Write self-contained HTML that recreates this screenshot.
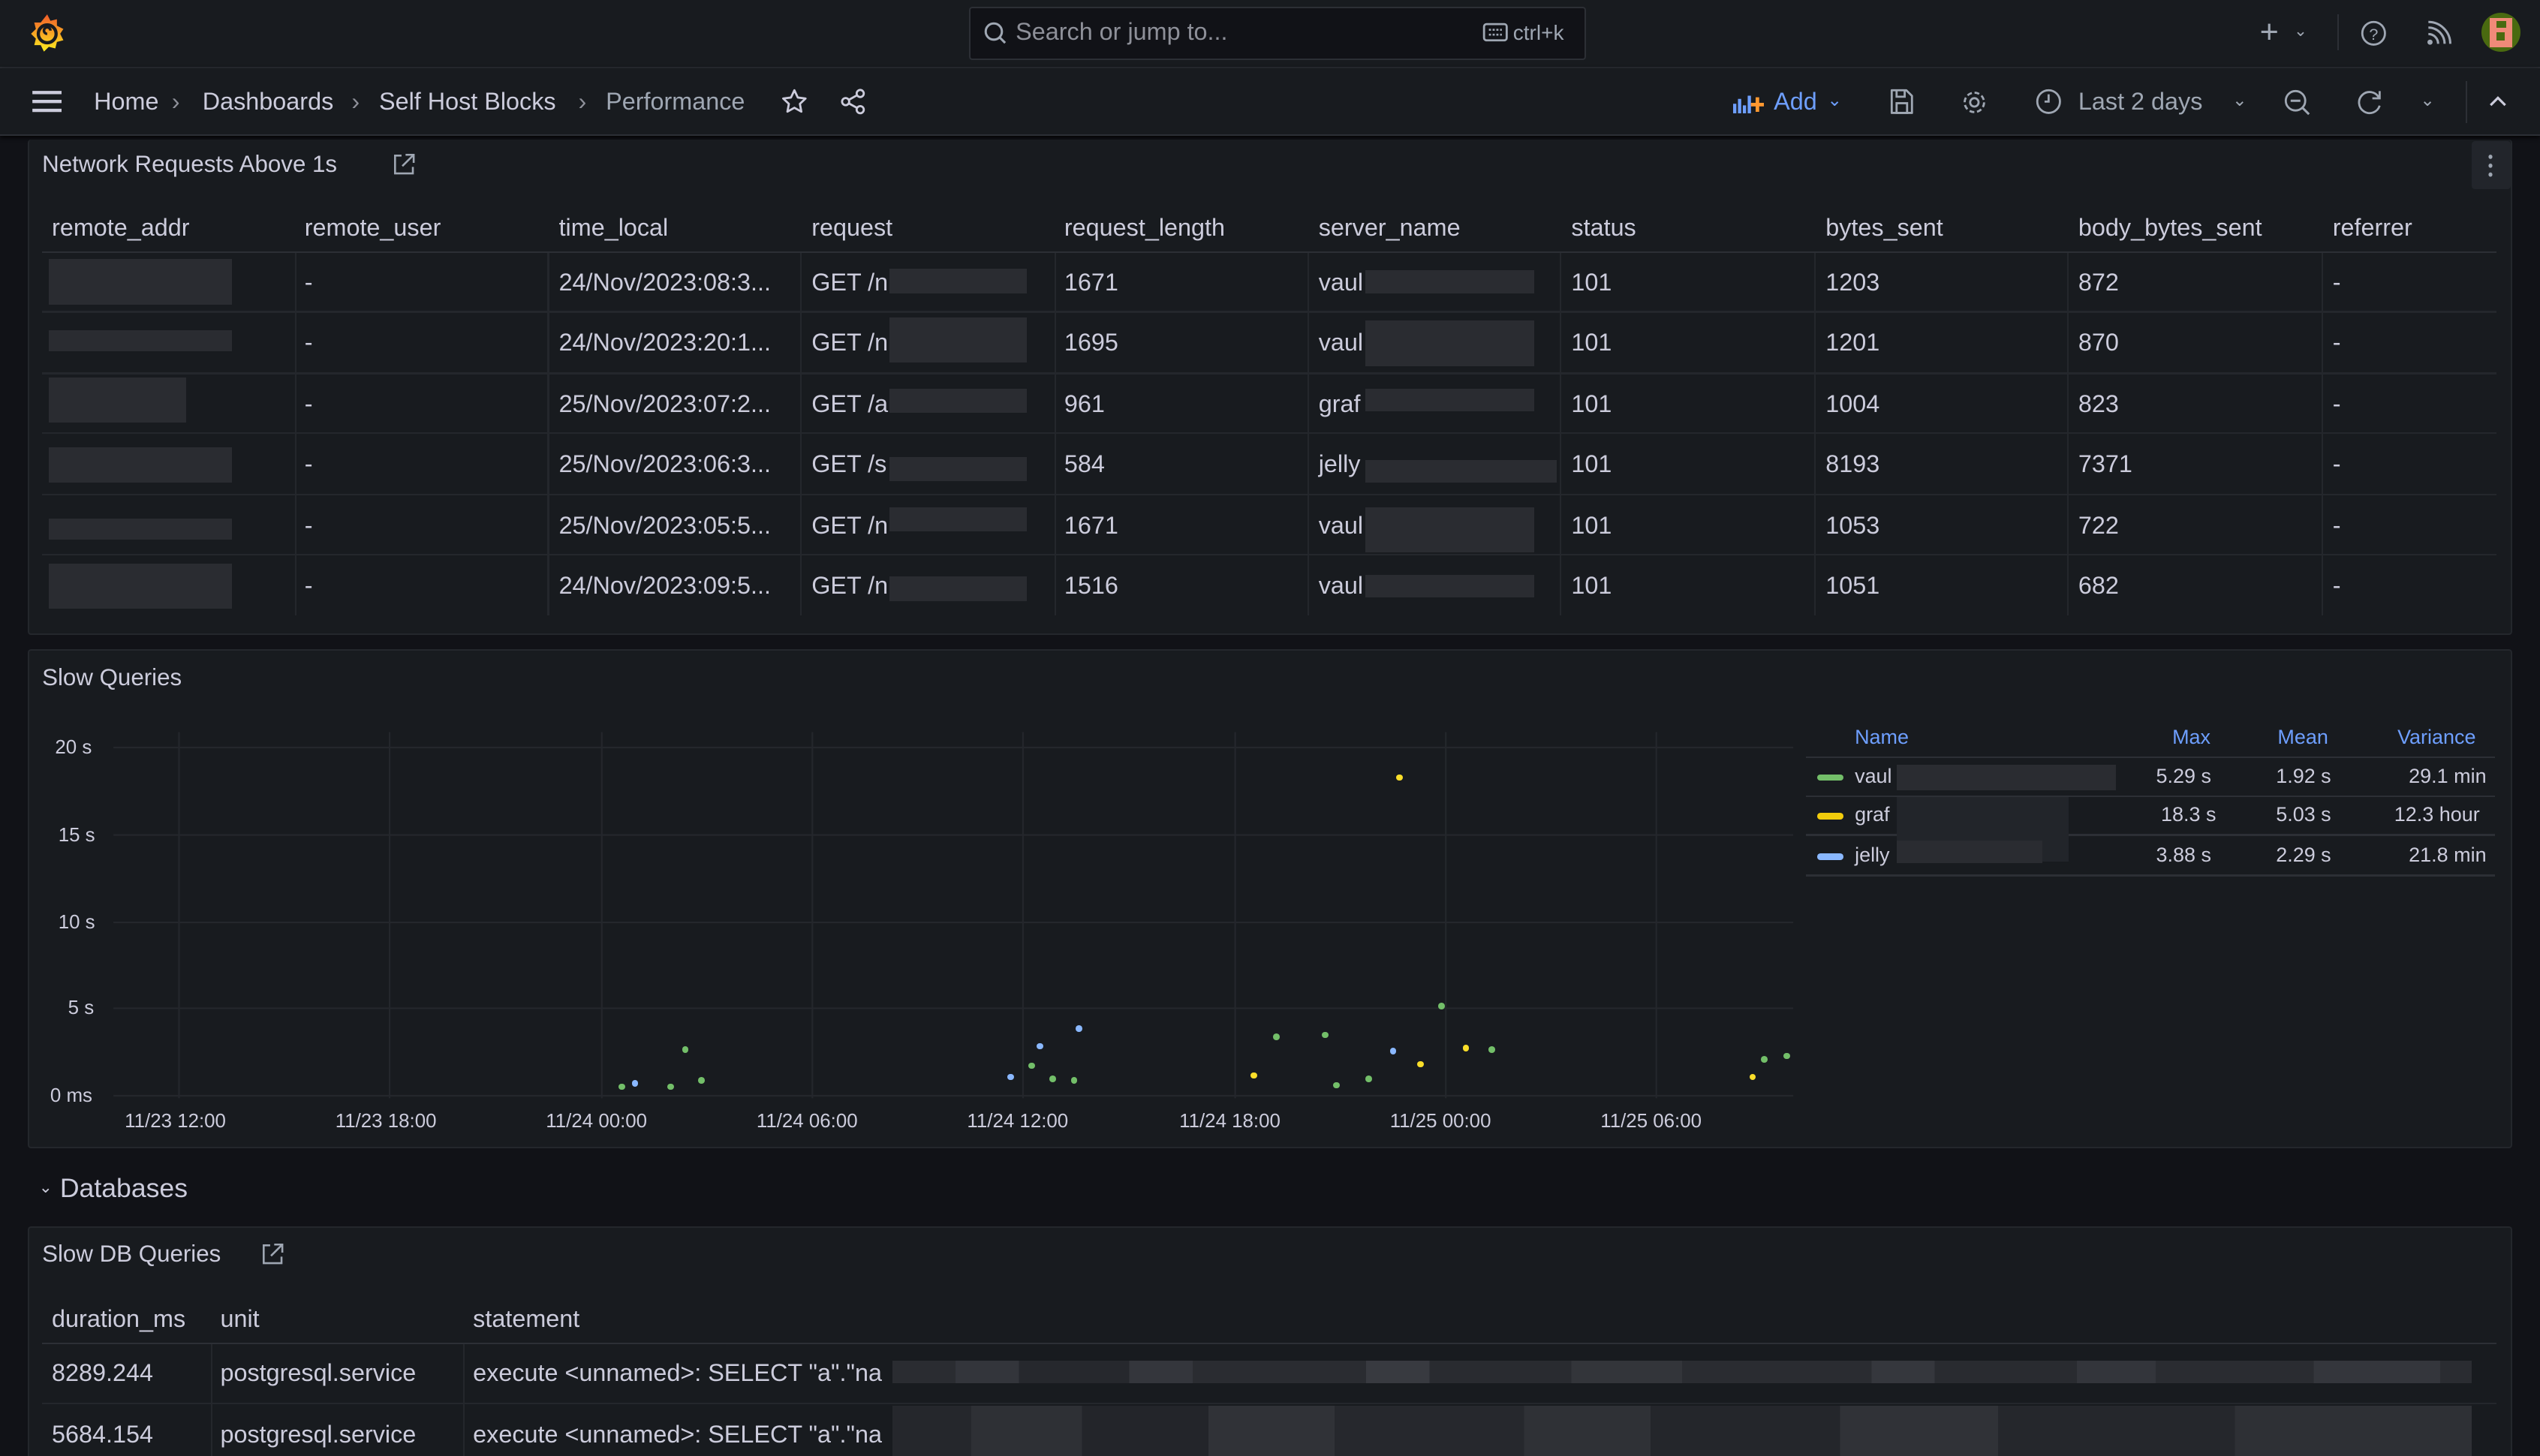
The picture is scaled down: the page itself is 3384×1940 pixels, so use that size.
<!DOCTYPE html>
<html><head><meta charset="utf-8">
<style>
*{box-sizing:border-box;margin:0;padding:0}
html,body{width:3384px;height:1940px;overflow:hidden;background:#111217}
#w{position:absolute;left:0;top:0;width:1568px;height:899px;zoom:2.15816;font-family:"Liberation Sans",sans-serif;color:#ccccdc;font-size:14.5px;background:#111217;overflow:hidden}
.a{position:absolute;white-space:nowrap}
.bar{position:absolute;left:0;width:1568px;background:#181b1f;border-bottom:1px solid #2c2f35}
.panel{position:absolute;background:#181b1f;border:1px solid #24272c;border-radius:2px;overflow:hidden}
.ttl{position:absolute;font-size:14.5px;color:#ccccdc}
.hl{position:absolute;height:1px;background:#2c2f35}
.vl{position:absolute;width:1px;background:#24272c}
.r{position:absolute;background:#2a2c31}
.icn{position:absolute}
.dot{position:absolute;width:4px;height:4px;border-radius:50%}
.g{background:#73bf69}.y{background:#fade2a}.b{background:#8ab8ff}
.ax{position:absolute;font-size:12px;color:#ccccdc}
.lg{font-size:12.5px}
.bc{position:absolute;top:54px;font-size:15px;color:#ccccdc}
.sep{position:absolute;top:54px;font-size:15px;color:#8e9099}
</style></head><body><div id="w">

<div class="bar" style="top:0;height:42px"></div>
<svg class="icn" style="left:17px;top:8px" width="24" height="26" viewBox="0 0 24 26">
<defs><linearGradient id="gf" x1="0" y1="1" x2="0" y2="0"><stop offset="0" stop-color="#fcee1f"/><stop offset="1" stop-color="#f15b2a"/></linearGradient></defs>
<path d="M12 1 L14 5 L18 4 L18 8 L22 10 L20 13 L22 17 L18 18 L17 22 L13 21 L10 24 L8 20 L4 20 L5 16 L2 13 L5 10 L4 6 L8 6 Z" fill="url(#gf)"/>
<circle cx="12" cy="13" r="5.5" fill="none" stroke="#181b1f" stroke-width="2"/><path d="M12 13 a2 2 0 1 1 2 -2" fill="none" stroke="#181b1f" stroke-width="1.6"/></svg>
<div class="a" style="left:598px;top:4px;width:381px;height:33px;background:#111217;border:1px solid #2c2f35;border-radius:2px"></div>
<svg class="icn" style="left:607px;top:13px" width="15" height="15" viewBox="0 0 15 15"><circle cx="6.5" cy="6.5" r="5" fill="none" stroke="#9fa7b3" stroke-width="1.4"/><path d="M10 10l3.5 3.5" stroke="#9fa7b3" stroke-width="1.4"/></svg>
<div class="a" style="left:627px;top:11px;color:#8e9099;font-size:15px">Search or jump to...</div>
<svg class="icn" style="left:915px;top:14px" width="16" height="12" viewBox="0 0 16 12"><rect x="1" y="1" width="14" height="10" rx="1.5" fill="none" stroke="#9fa7b3" stroke-width="1.3"/><path d="M4 4.5h8M4 7.5h8" stroke="#9fa7b3" stroke-width="1.2" stroke-dasharray="1.3 1"/></svg>
<div class="a" style="left:934px;top:13px;color:#9fa7b3;font-size:13px">ctrl+k</div>
<div class="a" style="left:1395px;top:9px;color:#9fa7b3;font-size:20px">+</div>
<div class="a" style="left:1416px;top:13px;color:#9fa7b3;font-size:10px">⌄</div>
<div class="vl" style="left:1443px;top:9px;height:22px;background:#2c2f35"></div>
<svg class="icn" style="left:1457px;top:12px" width="17" height="17" viewBox="0 0 17 17"><circle cx="8.5" cy="8.5" r="7" fill="none" stroke="#9fa7b3" stroke-width="1.3"/><text x="8.5" y="12.5" font-size="10" fill="#9fa7b3" text-anchor="middle" font-family="Liberation Sans">?</text></svg>
<svg class="icn" style="left:1497px;top:12px" width="17" height="17" viewBox="0 0 17 17"><circle cx="3" cy="14" r="1.6" fill="#9fa7b3"/><path d="M2 9a6 6 0 0 1 6 6M2 5a10 10 0 0 1 10 10M2 1.5a13.5 13.5 0 0 1 13.5 13.5" fill="none" stroke="#9fa7b3" stroke-width="1.4"/></svg>
<div class="a" style="left:1532px;top:8px;width:24px;height:24px;border-radius:50%;background:#4a6a10;overflow:hidden"><div style="position:absolute;left:5px;top:3px;width:14px;height:18px;background:#f08a78"></div><div style="position:absolute;left:9px;top:5px;width:6px;height:4px;background:#4a6a10"></div><div style="position:absolute;left:9px;top:12px;width:5px;height:5px;background:#4a6a10"></div></div>

<div class="bar" style="top:42px;height:42px;box-shadow:0 1px 3px #000"></div>
<svg class="icn" style="left:19px;top:55px" width="20" height="15" viewBox="0 0 20 15"><path d="M1 2h18M1 7.5h18M1 13h18" stroke="#ccccdc" stroke-width="2"/></svg>
<div class="bc" style="left:58px">Home</div>
<div class="sep" style="left:106px">›</div>
<div class="bc" style="left:125px">Dashboards</div>
<div class="sep" style="left:217px">›</div>
<div class="bc" style="left:234px">Self Host Blocks</div>
<div class="sep" style="left:357px">›</div>
<div class="bc" style="left:374px;color:#9fa7b3">Performance</div>
<svg class="icn" style="left:482px;top:54px" width="17" height="17" viewBox="0 0 17 17"><path d="M8.5 1.5l2.1 4.5 4.8.6-3.5 3.3.9 4.8-4.3-2.4-4.3 2.4.9-4.8L1.6 6.6l4.8-.6z" fill="none" stroke="#ccccdc" stroke-width="1.3" stroke-linejoin="round"/></svg>
<svg class="icn" style="left:518px;top:54px" width="17" height="17" viewBox="0 0 17 17"><circle cx="4" cy="8.5" r="2.2" fill="none" stroke="#ccccdc" stroke-width="1.3"/><circle cx="13" cy="3.5" r="2.2" fill="none" stroke="#ccccdc" stroke-width="1.3"/><circle cx="13" cy="13.5" r="2.2" fill="none" stroke="#ccccdc" stroke-width="1.3"/><path d="M6 7.4l5-2.8M6 9.6l5 2.8" stroke="#ccccdc" stroke-width="1.3"/></svg>
<svg class="icn" style="left:1070px;top:56px" width="20" height="14" viewBox="0 0 20 14"><path d="M1 14V8M4 14V5M7 14V9M10 14V3" stroke="#6e9fff" stroke-width="2"/><path d="M15 4v9M11 8.5h8" stroke="#ff9830" stroke-width="2.2"/></svg>
<div class="a" style="left:1095px;top:54px;font-size:15px;color:#6e9fff">Add</div>
<div class="a" style="left:1128px;top:55px;font-size:11px;color:#6e9fff">⌄</div>
<svg class="icn" style="left:1166px;top:54px" width="16" height="17" viewBox="0 0 16 17"><path d="M2 1.5h9l3.5 3.5v10.5H2z" fill="none" stroke="#9fa7b3" stroke-width="1.3" stroke-linejoin="round"/><rect x="5" y="9.5" width="6.5" height="6" fill="none" stroke="#9fa7b3" stroke-width="1.3"/><path d="M5 2v3.5h5V2" fill="none" stroke="#9fa7b3" stroke-width="1.3"/></svg>
<svg class="icn" style="left:1210px;top:54px" width="18" height="18" viewBox="0 0 18 18"><circle cx="9" cy="9" r="2.6" fill="none" stroke="#9fa7b3" stroke-width="1.3"/><circle cx="9" cy="9" r="6" fill="none" stroke="#9fa7b3" stroke-width="1.3" stroke-dasharray="3 1.7"/></svg>
<svg class="icn" style="left:1256px;top:54px" width="17" height="17" viewBox="0 0 17 17"><circle cx="8.5" cy="8.5" r="7" fill="none" stroke="#9fa7b3" stroke-width="1.3"/><path d="M8.5 4v4.5H6" fill="none" stroke="#9fa7b3" stroke-width="1.3"/></svg>
<div class="a" style="left:1283px;top:54px;font-size:15px;color:#9fa7b3">Last 2 days</div>
<div class="a" style="left:1378px;top:55px;font-size:11px;color:#9fa7b3">⌄</div>
<svg class="icn" style="left:1409px;top:54px" width="18" height="18" viewBox="0 0 18 18"><circle cx="8" cy="8" r="6" fill="none" stroke="#9fa7b3" stroke-width="1.3"/><path d="M5 8h6M12.3 12.3l4 4" stroke="#9fa7b3" stroke-width="1.4"/></svg>
<svg class="icn" style="left:1454px;top:54px" width="18" height="18" viewBox="0 0 18 18"><path d="M14.5 6A6.5 6.5 0 1 0 15 11" fill="none" stroke="#9fa7b3" stroke-width="1.3"/><path d="M15 2v4.5h-4.5" fill="none" stroke="#9fa7b3" stroke-width="1.3"/></svg>
<div class="a" style="left:1494px;top:55px;font-size:11px;color:#9fa7b3">⌄</div>
<div class="vl" style="left:1522px;top:50px;height:26px;background:#2c2f35"></div>
<svg class="icn" style="left:1536px;top:58px" width="12" height="9" viewBox="0 0 12 9"><path d="M1.5 7L6 2.5 10.5 7" fill="none" stroke="#ccccdc" stroke-width="1.5"/></svg>

<div class="panel" style="left:17px;top:86px;width:1534px;height:306px;border-top:none"></div>
<div class="ttl" style="left:26px;top:93px">Network Requests Above 1s</div>
<svg class="icn" style="left:242px;top:94px" width="15" height="15" viewBox="0 0 15 15"><path d="M6 2H2v11h11V9M8.5 1.5h5v5M13.5 1.5L6.5 8.5" fill="none" stroke="#9fa7b3" stroke-width="1.2"/></svg>
<div class="a" style="left:1526px;top:87px;width:24px;height:30px;background:#22252b;border-radius:2px"></div>
<div class="a" style="left:1536px;top:94px;width:3px;height:16px;background:radial-gradient(circle,#9fa7b3 1.2px,transparent 1.4px) 0 0/3px 5.5px"></div>

<div class="a" style="top:132px;left:32px;font-size:15px">remote_addr</div>
<div class="a" style="top:132px;left:188px;font-size:15px">remote_user</div>
<div class="a" style="top:132px;left:345px;font-size:15px">time_local</div>
<div class="a" style="top:132px;left:501px;font-size:15px">request</div>
<div class="a" style="top:132px;left:657px;font-size:15px">request_length</div>
<div class="a" style="top:132px;left:814px;font-size:15px">server_name</div>
<div class="a" style="top:132px;left:970px;font-size:15px">status</div>
<div class="a" style="top:132px;left:1127px;font-size:15px">bytes_sent</div>
<div class="a" style="top:132px;left:1283px;font-size:15px">body_bytes_sent</div>
<div class="a" style="top:132px;left:1440px;font-size:15px">referrer</div>
<div class="hl" style="left:26px;top:155px;width:1515px"></div>
<div class="hl" style="left:26px;top:192px;width:1515px;background:#24272c"></div>
<div class="hl" style="left:26px;top:230px;width:1515px;background:#24272c"></div>
<div class="hl" style="left:26px;top:267px;width:1515px;background:#24272c"></div>
<div class="hl" style="left:26px;top:305px;width:1515px;background:#24272c"></div>
<div class="hl" style="left:26px;top:342px;width:1515px;background:#24272c"></div>
<div class="vl" style="left:182px;top:156px;height:224px"></div>
<div class="vl" style="left:338px;top:156px;height:224px"></div>
<div class="vl" style="left:494px;top:156px;height:224px"></div>
<div class="vl" style="left:651px;top:156px;height:224px"></div>
<div class="vl" style="left:807px;top:156px;height:224px"></div>
<div class="vl" style="left:963px;top:156px;height:224px"></div>
<div class="vl" style="left:1120px;top:156px;height:224px"></div>
<div class="vl" style="left:1276px;top:156px;height:224px"></div>
<div class="vl" style="left:1433px;top:156px;height:224px"></div>

<div style="position:absolute;left:0;top:0;font-size:15px">
<div class="r" style="left:30px;top:160px;width:113px;height:28px"></div>
<div class="r" style="left:30px;top:204px;width:113px;height:13px"></div>
<div class="r" style="left:30px;top:233px;width:85px;height:28px"></div>
<div class="r" style="left:30px;top:276px;width:113px;height:22px"></div>
<div class="r" style="left:30px;top:320px;width:113px;height:13px"></div>
<div class="r" style="left:30px;top:348px;width:113px;height:28px"></div>

<div class="a" style="left:188px;top:166px">-</div><div class="a" style="left:188px;top:203px">-</div><div class="a" style="left:188px;top:241px">-</div><div class="a" style="left:188px;top:278px">-</div><div class="a" style="left:188px;top:316px">-</div><div class="a" style="left:188px;top:353px">-</div>
<div class="a" style="left:345px;top:166px">24/Nov/2023:08:3...</div>
<div class="a" style="left:345px;top:203px">24/Nov/2023:20:1...</div>
<div class="a" style="left:345px;top:241px">25/Nov/2023:07:2...</div>
<div class="a" style="left:345px;top:278px">25/Nov/2023:06:3...</div>
<div class="a" style="left:345px;top:316px">25/Nov/2023:05:5...</div>
<div class="a" style="left:345px;top:353px">24/Nov/2023:09:5...</div>
<div class="a" style="left:501px;top:166px">GET /n</div><div class="a" style="left:501px;top:203px">GET /n</div><div class="a" style="left:501px;top:241px">GET /a</div><div class="a" style="left:501px;top:278px">GET /s</div><div class="a" style="left:501px;top:316px">GET /n</div><div class="a" style="left:501px;top:353px">GET /n</div>
<div class="r" style="left:549px;top:166px;width:85px;height:15px"></div>
<div class="r" style="left:549px;top:196px;width:85px;height:28px"></div>
<div class="r" style="left:549px;top:240px;width:85px;height:15px"></div>
<div class="r" style="left:549px;top:282px;width:85px;height:15px"></div>
<div class="r" style="left:549px;top:313px;width:85px;height:15px"></div>
<div class="r" style="left:549px;top:356px;width:85px;height:15px"></div>
<div class="a" style="left:657px;top:166px">1671</div><div class="a" style="left:657px;top:203px">1695</div><div class="a" style="left:657px;top:241px">961</div><div class="a" style="left:657px;top:278px">584</div><div class="a" style="left:657px;top:316px">1671</div><div class="a" style="left:657px;top:353px">1516</div>
<div class="a" style="left:814px;top:166px">vaul</div><div class="a" style="left:814px;top:203px">vaul</div><div class="a" style="left:814px;top:241px">graf</div><div class="a" style="left:814px;top:278px">jelly</div><div class="a" style="left:814px;top:316px">vaul</div><div class="a" style="left:814px;top:353px">vaul</div>
<div class="r" style="left:843px;top:167px;width:104px;height:14px"></div>
<div class="r" style="left:843px;top:198px;width:104px;height:28px"></div>
<div class="r" style="left:843px;top:240px;width:104px;height:14px"></div>
<div class="r" style="left:843px;top:284px;width:118px;height:14px"></div>
<div class="r" style="left:843px;top:313px;width:104px;height:28px"></div>
<div class="r" style="left:843px;top:355px;width:104px;height:14px"></div>
<div class="a" style="left:970px;top:166px">101</div><div class="a" style="left:970px;top:203px">101</div><div class="a" style="left:970px;top:241px">101</div><div class="a" style="left:970px;top:278px">101</div><div class="a" style="left:970px;top:316px">101</div><div class="a" style="left:970px;top:353px">101</div>
<div class="a" style="left:1127px;top:166px">1203</div><div class="a" style="left:1127px;top:203px">1201</div><div class="a" style="left:1127px;top:241px">1004</div><div class="a" style="left:1127px;top:278px">8193</div><div class="a" style="left:1127px;top:316px">1053</div><div class="a" style="left:1127px;top:353px">1051</div>
<div class="a" style="left:1283px;top:166px">872</div><div class="a" style="left:1283px;top:203px">870</div><div class="a" style="left:1283px;top:241px">823</div><div class="a" style="left:1283px;top:278px">7371</div><div class="a" style="left:1283px;top:316px">722</div><div class="a" style="left:1283px;top:353px">682</div>
<div class="a" style="left:1440px;top:166px">-</div><div class="a" style="left:1440px;top:203px">-</div><div class="a" style="left:1440px;top:241px">-</div><div class="a" style="left:1440px;top:278px">-</div><div class="a" style="left:1440px;top:316px">-</div><div class="a" style="left:1440px;top:353px">-</div>
</div>

<div class="panel" style="left:17px;top:401px;width:1534px;height:308px"></div>
<div class="ttl" style="left:26px;top:410px">Slow Queries</div>
<svg class="icn" style="left:0;top:0" width="1568" height="899">
<g stroke="#24272c" stroke-width="1">
<path d="M70 461.5H1107M70 515.5H1107M70 569.5H1107M70 622.5H1107M70 676.5H1107"/>
<path d="M110.5 452V678M240.5 452V678M371.5 452V678M501.5 452V678M631.5 452V678M762.5 452V678M892.5 452V678M1022.5 452V678"/>
</g></svg>
<div class="ax" style="left:34px;top:455px">20 s</div>
<div class="ax" style="left:36px;top:509px">15 s</div>
<div class="ax" style="left:36px;top:563px">10 s</div>
<div class="ax" style="left:42px;top:616px">5 s</div>
<div class="ax" style="left:31px;top:670px">0 ms</div>
<div class="ax" style="left:77px;top:686px">11/23 12:00</div>
<div class="ax" style="left:207px;top:686px">11/23 18:00</div>
<div class="ax" style="left:337px;top:686px">11/24 00:00</div>
<div class="ax" style="left:467px;top:686px">11/24 06:00</div>
<div class="ax" style="left:597px;top:686px">11/24 12:00</div>
<div class="ax" style="left:728px;top:686px">11/24 18:00</div>
<div class="ax" style="left:858px;top:686px">11/25 00:00</div>
<div class="ax" style="left:988px;top:686px">11/25 06:00</div>
<div class="dot g" style="left:382px;top:669px"></div>
<div class="dot b" style="left:390px;top:667px"></div>
<div class="dot g" style="left:412px;top:669px"></div>
<div class="dot g" style="left:421px;top:646px"></div>
<div class="dot g" style="left:431px;top:665px"></div>
<div class="dot b" style="left:622px;top:663px"></div>
<div class="dot g" style="left:635px;top:656px"></div>
<div class="dot b" style="left:640px;top:644px"></div>
<div class="dot g" style="left:648px;top:664px"></div>
<div class="dot g" style="left:661px;top:665px"></div>
<div class="dot b" style="left:664px;top:633px"></div>
<div class="dot y" style="left:772px;top:662px"></div>
<div class="dot g" style="left:786px;top:638px"></div>
<div class="dot g" style="left:816px;top:637px"></div>
<div class="dot g" style="left:823px;top:668px"></div>
<div class="dot g" style="left:843px;top:664px"></div>
<div class="dot b" style="left:858px;top:647px"></div>
<div class="dot y" style="left:862px;top:478px"></div>
<div class="dot y" style="left:875px;top:655px"></div>
<div class="dot g" style="left:888px;top:619px"></div>
<div class="dot y" style="left:903px;top:645px"></div>
<div class="dot g" style="left:919px;top:646px"></div>
<div class="dot y" style="left:1080px;top:663px"></div>
<div class="dot g" style="left:1087px;top:652px"></div>
<div class="dot g" style="left:1101px;top:650px"></div>

<div class="a lg" style="left:1145px;top:448px;color:#6e9fff">Name</div>
<div class="a lg" style="left:1341px;top:448px;color:#6e9fff">Max</div>
<div class="a lg" style="left:1406px;top:448px;color:#6e9fff">Mean</div>
<div class="a lg" style="left:1480px;top:448px;color:#6e9fff">Variance</div>
<div class="hl" style="left:1115px;top:467px;width:425px"></div>
<div class="hl" style="left:1115px;top:491px;width:425px"></div>
<div class="hl" style="left:1115px;top:515px;width:425px"></div>
<div class="hl" style="left:1115px;top:540px;width:425px"></div>
<div class="a" style="left:1122px;top:478px;width:16px;height:4px;border-radius:2px;background:#73bf69"></div>
<div class="a" style="left:1122px;top:502px;width:16px;height:4px;border-radius:2px;background:#f2cc0c"></div>
<div class="a" style="left:1122px;top:527px;width:16px;height:4px;border-radius:2px;background:#8ab8ff"></div>
<div class="a lg" style="left:1145px;top:472px">vaul</div>
<div class="a lg" style="left:1145px;top:496px">graf</div>
<div class="a lg" style="left:1145px;top:521px">jelly</div>
<div class="r" style="left:1171px;top:472px;width:135px;height:16px"></div>
<div class="r" style="left:1171px;top:492px;width:106px;height:40px;background:#22252a"></div>
<div class="r" style="left:1171px;top:519px;width:90px;height:14px"></div>
<div class="a lg" style="left:1331px;top:472px">5.29 s</div>
<div class="a lg" style="left:1334px;top:496px">18.3 s</div>
<div class="a lg" style="left:1331px;top:521px">3.88 s</div>
<div class="a lg" style="left:1405px;top:472px">1.92 s</div>
<div class="a lg" style="left:1405px;top:496px">5.03 s</div>
<div class="a lg" style="left:1405px;top:521px">2.29 s</div>
<div class="a lg" style="left:1487px;top:472px">29.1 min</div>
<div class="a lg" style="left:1478px;top:496px">12.3 hour</div>
<div class="a lg" style="left:1487px;top:521px">21.8 min</div>

<div class="a" style="left:24px;top:727px;font-size:10px;color:#ccccdc">⌄</div>
<div class="a" style="left:37px;top:724px;font-size:16.5px;color:#ccccdc">Databases</div>

<div class="panel" style="left:17px;top:757px;width:1534px;height:160px"></div>
<div class="ttl" style="left:26px;top:766px">Slow DB Queries</div>
<svg class="icn" style="left:161px;top:767px" width="15" height="15" viewBox="0 0 15 15"><path d="M6 2H2v11h11V9M8.5 1.5h5v5M13.5 1.5L6.5 8.5" fill="none" stroke="#9fa7b3" stroke-width="1.2"/></svg>
<div class="a" style="left:32px;top:806px;font-size:15px">duration_ms</div>
<div class="a" style="left:136px;top:806px;font-size:15px">unit</div>
<div class="a" style="left:292px;top:806px;font-size:15px">statement</div>
<div class="hl" style="left:26px;top:829px;width:1515px"></div>
<div class="hl" style="left:26px;top:866px;width:1515px;background:#24272c"></div>
<div class="vl" style="left:130px;top:830px;height:80px"></div>
<div class="vl" style="left:286px;top:830px;height:80px"></div>
<div class="a" style="left:32px;top:839px;font-size:15px">8289.244</div>
<div class="a" style="left:32px;top:877px;font-size:15px">5684.154</div>
<div class="a" style="left:136px;top:839px;font-size:15px">postgresql.service</div>
<div class="a" style="left:136px;top:877px;font-size:15px">postgresql.service</div>
<div class="a" style="left:292px;top:839px;font-size:15px">execute &lt;unnamed&gt;: SELECT "a"."na</div>
<div class="a" style="left:292px;top:877px;font-size:15px">execute &lt;unnamed&gt;: SELECT "a"."na</div>
<div class="r" style="left:551px;top:840px;width:975px;height:14px;background:linear-gradient(90deg,#2a2c31 0 4%,#33353b 4% 8%,#26282d 8% 15%,#34363c 15% 19%,#2a2c31 19% 30%,#383a40 30% 34%,#292b30 34% 43%,#33353a 43% 50%,#2a2c31 50% 62%,#35373d 62% 66%,#292b30 66% 75%,#33353b 75% 80%,#2a2c31 80% 90%,#34363c 90% 98%,#2a2c31 98%)"></div>
<div class="r" style="left:551px;top:868px;width:975px;height:31px;background:linear-gradient(90deg,#25272c 0 5%,#2e3035 5% 12%,#23252a 12% 20%,#303237 20% 28%,#26282d 28% 40%,#2f3136 40% 48%,#24262b 48% 60%,#303237 60% 70%,#25272c 70% 85%,#2e3035 85% 100%)"></div>

</div></body></html>
